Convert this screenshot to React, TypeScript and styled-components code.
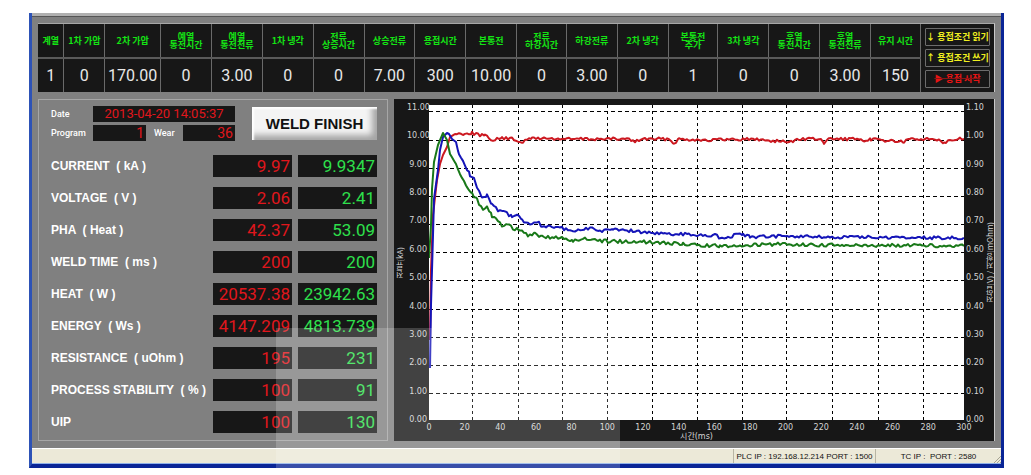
import React from 'react';
import styled, { createGlobalStyle, css } from 'styled-components';

const GlobalStyle = createGlobalStyle`
  *, *::before, *::after { box-sizing: border-box; }
  body { margin: 0; background: #fff; font-family: "Liberation Sans", "Noto Sans CJK KR", sans-serif; }
`;

const RED = '#e0161c';
const GREEN = '#2ee04c';
const BLACK = '#171717';

const Page = styled.div`
  padding: 13px 27px 7px 29px;
`;

const Window = styled.main`
  position: relative;
  border: solid #0a2596;
  border-width: 0 3px 4px 3px;
  border-left-color: #2d52b6;
  background: #808080;
`;

const TitleEdge = styled.div`
  height: 4px;
  background: #b0b0b0;
  border-bottom: 1px solid #555;
`;

const Body = styled.div`
  display: flex;
  flex-direction: column;
  gap: 7px;
  padding: 6px 6px 7px 6px;
`;

const Conditions = styled.section`
  display: flex;
  background: ${BLACK};
  border-top: 1px solid #a8a8a8;
  border-right: 1px solid #c8c8c8;
`;

const ConditionTable = styled.table`
  flex: 1;
  min-width: 0;
  table-layout: fixed;
  border-collapse: collapse;
`;

const ConditionName = styled.th`
  height: 34px;
  padding: 0;
  border-right: 1px solid #6a6a6a;
  border-bottom: 2px solid #5a5a5a;
  color: #14e414;
  font: bold 9px/8px "Noto Sans CJK KR", sans-serif;
  white-space: pre-line;
`;

const ConditionValue = styled.td`
  height: 34px;
  padding: 0;
  border-right: 1px solid #6a6a6a;
  color: #e8e8e8;
  font: 16px/20px Roboto, sans-serif;
  text-align: center;
`;

const Actions = styled.div`
  display: flex;
  flex-direction: column;
  justify-content: center;
  gap: 3px;
  width: 73px;
  padding: 0 4px;
`;

const ActionButton = styled.button<{ $start?: boolean }>`
  height: 18px;
  padding: 0;
  border: 1px solid #6c6c6c;
  border-radius: 1px;
  background: ${BLACK};
  color: ${(p) => (p.$start ? '#e81414' : '#f0f020')};
  font: bold 9px/14px "Noto Sans CJK KR", sans-serif;
  white-space: nowrap;
  ${(p) => p.$start && css`text-decoration: line-through 1px #8c1414;`}
`;

const Columns = styled.div`
  display: flex;
  gap: 6px;
`;

const Monitor = styled.section`
  flex: 0 0 350px;
  padding: 6px 10px 0 12px;
  border: 1px solid #a6a6a6;
`;

const Status = styled.div`
  display: flex;
  justify-content: space-between;
  margin-bottom: 9px;
`;

const StatusGrid = styled.div`
  display: grid;
  grid-template-columns: 42px 53px 37px 52px;
  grid-auto-rows: 16px;
  row-gap: 3px;
`;

const SmallLabel = styled.label<{ $indent?: boolean }>`
  padding-left: ${(p) => (p.$indent ? 8 : 0)}px;
  color: #fff;
  font: 500 9px/16px Roboto, sans-serif;
`;

const SmallDisplay = styled.output<{ $wide?: boolean }>`
  grid-column: ${(p) => (p.$wide ? 'span 3' : 'auto')};
  padding-right: ${(p) => (p.$wide ? 0 : 2)}px;
  background: ${BLACK};
  color: ${RED};
  font: ${(p) => (p.$wide ? 13 : 14)}px/16px Roboto, sans-serif;
  text-align: ${(p) => (p.$wide ? 'center' : 'right')};
  white-space: nowrap;
`;

const FinishButton = styled.button`
  width: 125px;
  height: 33px;
  margin-top: 1px;
  padding: 0;
  border: 0;
  background: #f4f4f4;
  box-shadow: inset 2px 2px 2px #fff, inset -5px -5px 6px #a4a4a4;
  color: #111;
  font: bold 15px/33px "Liberation Sans", sans-serif;
`;

const ReadoutTable = styled.table`
  width: 100%;
  table-layout: fixed;
  border-collapse: collapse;
`;

const ReadoutName = styled.th`
  height: 32px;
  padding: 0;
  color: #fff;
  font: bold 12px/20px "Liberation Sans", sans-serif;
  text-align: left;
  white-space: pre;
`;

const ReadoutCell = styled.td`
  padding: 0 0 0 6px;
`;

const Display = styled.span<{ $color: string }>`
  display: block;
  height: 22px;
  padding-right: 2px;
  background: ${BLACK};
  color: ${(p) => p.$color};
  font: 17px/22px Roboto, sans-serif;
  text-align: right;
`;

const ChartPanel = styled.section`
  flex: 1;
  min-width: 0;
  display: grid;
  grid-template-columns: 11px 24px minmax(0, 1fr) 21px 9px;
  grid-template-rows: 326px 16px;
  background: ${BLACK};
  border-right: 1px solid #c8c8c8;
  color: #d4d4d4;
  font: 8px/10px "DejaVu Sans", "Noto Sans CJK KR", sans-serif;
`;

const Scale = styled.div<{ $right?: boolean }>`
  display: flex;
  flex-direction: column;
  justify-content: space-between;
  padding: 4px 2px 0;
  text-align: ${(p) => (p.$right ? 'left' : 'right')};
`;

const AxisTitle = styled.div`
  justify-self: center;
  align-self: center;
  writing-mode: vertical-rl;
  transform: rotate(180deg);
  font: 8px/9px "Noto Sans CJK KR", sans-serif;
  white-space: nowrap;
`;

const Plot = styled.svg`
  display: block;
  width: 100%;
  height: 315px;
  margin-top: 6px;
  background: #fff;
`;

const TimeScale = styled.div`
  grid-column: 3;
  margin: -2px -10px 0;
`;

const Ticks = styled.div`
  display: flex;
  justify-content: space-between;
`;

const Tick = styled.span`
  width: 20px;
  text-align: center;
`;

const TimeTitle = styled.div`
  font: 8px/8px "DejaVu Sans", "Noto Sans CJK KR", sans-serif;
  text-align: center;
`;

const StatusBar = styled.footer`
  display: flex;
  height: 16px;
  background: #ece9d8;
  border-top: 1px solid #fff;
  border-bottom: 1px solid #8fb0e8;
`;

const StatusCell = styled.div<{ $width: number }>`
  width: ${(p) => p.$width}px;
  border-left: 1px solid #b8b5a4;
  color: #111;
  font: 8px/15px "Liberation Sans", sans-serif;
  text-align: center;
  white-space: pre;
`;

const Spacer = styled.div`
  flex: 1;
`;

const Grip = styled.svg`
  position: absolute;
  right: 0;
  bottom: 1px;
`;

const Haze = styled.div`
  position: absolute;
  left: 244px;
  bottom: -4px;
  width: 344px;
  height: 140px;
  background: rgba(255, 255, 255, 0.19);
  pointer-events: none;
`;

const conditions: [string, string, number][] = [
  ['계열', '1', 26],
  ['1차 가압', '0', 41],
  ['2차 가압', '170.00', 56],
  ['예열\n통전시간', '0', 51],
  ['예열\n통전전류', '3.00', 51],
  ['1차 냉각', '0', 51],
  ['전류\n상승시간', '0', 51],
  ['상승전류', '7.00', 51],
  ['용접시간', '300', 51],
  ['본통전', '10.00', 51],
  ['전류\n하강시간', '0', 50],
  ['하강전류', '3.00', 51],
  ['2차 냉각', '0', 51],
  ['본통전\n추가', '1', 50],
  ['3차 냉각', '0', 51],
  ['후열\n통전시간', '0', 51],
  ['후열\n통전전류', '3.00', 51],
  ['유지 시간', '150', 50],
];
const conditionTotal = conditions.reduce((sum, c) => sum + c[2], 0);

const readouts = [
  ['CURRENT  ( kA )', '9.97', '9.9347'],
  ['VOLTAGE  ( V )', '2.06', '2.41'],
  ['PHA  ( Heat )', '42.37', '53.09'],
  ['WELD TIME  ( ms )', '200', '200'],
  ['HEAT  ( W )', '20537.38', '23942.63'],
  ['ENERGY  ( Ws )', '4147.209', '4813.739'],
  ['RESISTANCE  ( uOhm )', '195', '231'],
  ['PROCESS STABILITY  ( % )', '100', '91'],
  ['UIP', '100', '130'],
];

type Point = [number, number];

const redTrace: Point[] = [
  [1, 235], [2, 165], [4, 110], [8, 75], [11, 59], [14, 50], [18, 42], [21, 32], [26, 29], [43, 28],
  [56, 31], [64, 35], [73, 33], [83, 34], [94, 37], [103, 33], [132, 34], [200, 34], [206, 37], [212, 34],
  [240, 34], [245, 38], [250, 34], [280, 35], [320, 34], [362, 37], [368, 34], [390, 34], [395, 38],
  [400, 34], [430, 34], [435, 38], [442, 34], [475, 37], [482, 34], [510, 34], [515, 38], [521, 34], [535, 34],
];
const blueTrace: Point[] = [
  [1, 263], [2, 200], [4, 130], [5, 94], [9, 65], [11, 45], [14, 32], [18, 28], [20, 29], [23, 34],
  [27, 37], [30, 49], [36, 60], [41, 70], [45, 73], [48, 82], [53, 93], [58, 90], [63, 99], [69, 105],
  [78, 108], [83, 112], [88, 110], [93, 115], [101, 119], [108, 116], [113, 121], [133, 123], [144, 127],
  [149, 124], [163, 124], [171, 127], [184, 124], [224, 128], [268, 130], [286, 130], [291, 133],
  [314, 129], [321, 132], [358, 131], [391, 132], [535, 133],
];
const greenTrace: Point[] = [
  [0, 153], [2, 120], [3, 84], [5, 57], [9, 40], [14, 28], [18, 35], [21, 49], [27, 59], [31, 69],
  [38, 82], [43, 89], [48, 95], [54, 105], [58, 103], [63, 111], [73, 121], [78, 118], [84, 124],
  [89, 124], [101, 131], [106, 128], [113, 132], [133, 133], [144, 136], [156, 133], [169, 136],
  [221, 137], [254, 139], [291, 141], [354, 139], [391, 140], [535, 141],
];

/* Resamples a trace every 2 units and adds measurement ripple after the weld has ramped up. */
function toPath(trace: Point[], seed: number, ripple: number) {
  let state = seed;
  const random = () => {
    state = (state * 1103515245 + 12345) % 2147483648;
    return state / 2147483648 - 0.5;
  };
  const points: string[] = [];
  for (let i = 0; i < trace.length - 1; i += 1) {
    const [x0, y0] = trace[i];
    const [x1, y1] = trace[i + 1];
    for (let x = x0; x < x1; x += 2) {
      const noise = x < 28 ? 0 : random() * ripple;
      points.push(`${x},${(y0 + ((y1 - y0) * (x - x0)) / (x1 - x0) + noise).toFixed(1)}`);
    }
  }
  const last = trace[trace.length - 1];
  points.push(`${last[0]},${last[1]}`);
  return points.join(' ');
}

const gridX = [43, 89, 133, 178, 223, 268, 313, 357, 403, 449, 494];
const gridY = [6, 35, 63, 91, 119, 147, 175, 204, 232, 260, 288];
const scaleSteps = Array.from({ length: 12 }, (_, i) => 11 - i);
const timeSteps = Array.from({ length: 16 }, (_, i) => i * 20);

function WeldChart() {
  return (
    <ChartPanel aria-label="용접 파형">
      <AxisTitle>전류(kA)</AxisTitle>
      <Scale>
        {scaleSteps.map((n) => <span key={n}>{n.toFixed(2)}</span>)}
      </Scale>
      <Plot viewBox="0 0 535 315" preserveAspectRatio="none">
        <g stroke="#000" strokeWidth="1" strokeDasharray="4 3" shapeRendering="crispEdges">
          {gridY.map((y) => <line key={y} x1="0" x2="535" y1={y + 0.5} y2={y + 0.5} />)}
        </g>
        <g stroke="#000" strokeWidth="1" strokeDasharray="3 3" shapeRendering="crispEdges">
          {gridX.map((x) => <line key={x} y1="0" y2="315" x1={x + 0.5} x2={x + 0.5} />)}
        </g>
        <g fill="none" strokeWidth="2" strokeLinejoin="round">
          <polyline stroke="#cc1820" points={toPath(redTrace, 7, 3)} />
          <polyline stroke="#1414b8" points={toPath(blueTrace, 21, 3.2)} />
          <polyline stroke="#187818" points={toPath(greenTrace, 44, 3.4)} />
        </g>
      </Plot>
      <Scale $right>
        {scaleSteps.map((n) => <span key={n}>{(n / 10).toFixed(2)}</span>)}
      </Scale>
      <AxisTitle>전압(V) / 저항(mOhm)</AxisTitle>
      <TimeScale>
        <Ticks>
          {timeSteps.map((t) => <Tick key={t}>{t}</Tick>)}
        </Ticks>
        <TimeTitle>시간(ms)</TimeTitle>
      </TimeScale>
    </ChartPanel>
  );
}

export default function App() {
  return (
    <Page>
      <GlobalStyle />
      <Window>
        <TitleEdge />
        <Body>
          <Conditions>
            <ConditionTable>
              <colgroup>
                {conditions.map(([name, , width], i) => (
                  <col key={name + i} style={{ width: `${(width / conditionTotal) * 100}%` }} />
                ))}
              </colgroup>
              <thead>
                <tr>
                  {conditions.map(([name], i) => <ConditionName key={i} scope="col">{name}</ConditionName>)}
                </tr>
              </thead>
              <tbody>
                <tr>
                  {conditions.map(([, value], i) => <ConditionValue key={i}>{value}</ConditionValue>)}
                </tr>
              </tbody>
            </ConditionTable>
            <Actions>
              <ActionButton type="button">↓ 용접조건 읽기</ActionButton>
              <ActionButton type="button">↑ 용접조건 쓰기</ActionButton>
              <ActionButton type="button" $start>▶ 용접 시작</ActionButton>
            </Actions>
          </Conditions>
          <Columns>
            <Monitor>
              <Status>
                <StatusGrid>
                  <SmallLabel htmlFor="date">Date</SmallLabel>
                  <SmallDisplay id="date" $wide>2013-04-20 14:05:37</SmallDisplay>
                  <SmallLabel htmlFor="program">Program</SmallLabel>
                  <SmallDisplay id="program">1</SmallDisplay>
                  <SmallLabel htmlFor="wear" $indent>Wear</SmallLabel>
                  <SmallDisplay id="wear">36</SmallDisplay>
                </StatusGrid>
                <FinishButton type="button">WELD FINISH</FinishButton>
              </Status>
              <ReadoutTable>
                <colgroup>
                  <col />
                  <col width="85" />
                  <col width="85" />
                </colgroup>
                <tbody>
                  {readouts.map(([name, measured, actual]) => (
                    <tr key={name}>
                      <ReadoutName scope="row">{name}</ReadoutName>
                      <ReadoutCell><Display $color={RED}>{measured}</Display></ReadoutCell>
                      <ReadoutCell><Display $color={GREEN}>{actual}</Display></ReadoutCell>
                    </tr>
                  ))}
                </tbody>
              </ReadoutTable>
            </Monitor>
            <WeldChart />
          </Columns>
        </Body>
        <StatusBar>
          <Spacer />
          <StatusCell $width={142}>PLC IP : 192.168.12.214 PORT : 1500</StatusCell>
          <StatusCell $width={126}>TC IP :  PORT : 2580</StatusCell>
        </StatusBar>
        <Grip width="8" height="8" viewBox="0 0 8 8" stroke="#a5a291" fill="none">
          <path d="M1 8L8 1M4 8L8 4M7 8L8 7" />
        </Grip>
        <Haze />
      </Window>
    </Page>
  );
}
